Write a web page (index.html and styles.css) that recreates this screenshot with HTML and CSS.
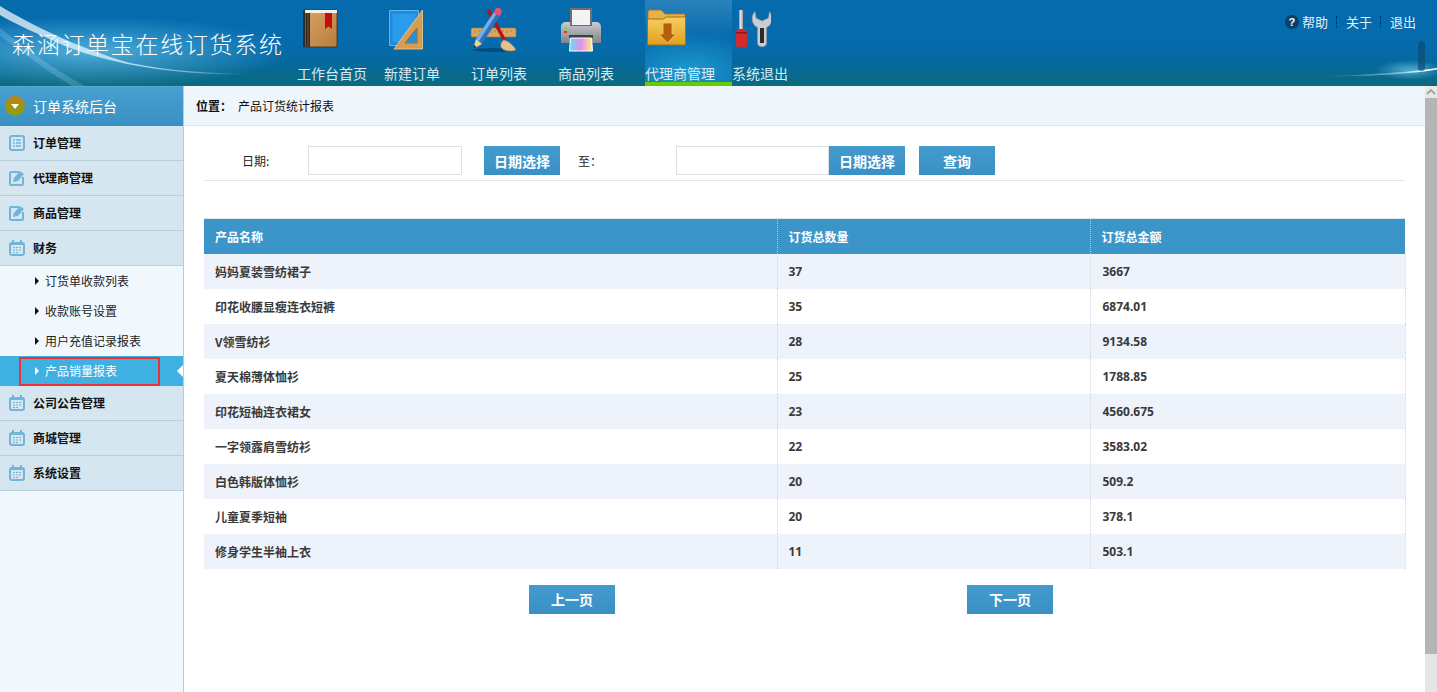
FILE: index.html
```html
<!DOCTYPE html>
<html lang="zh-CN">
<head>
<meta charset="utf-8">
<title>森涵订单宝在线订货系统</title>
<link rel="stylesheet" href="styles.css">
</head>
<body>
<header class="top">
  <svg class="swoosh" width="1437" height="86" viewBox="0 0 1437 86" aria-hidden="true">
    <defs>
      <linearGradient id="sw1" x1="0" x2="1" y1="0" y2="0"><stop offset="0" stop-color="#fff" stop-opacity=".7"/><stop offset=".6" stop-color="#d4f2ff" stop-opacity=".75"/><stop offset="1" stop-color="#bfeaff" stop-opacity="0"/></linearGradient>
      <radialGradient id="gl"><stop offset="0" stop-color="#7fd8f7" stop-opacity=".6"/><stop offset="1" stop-color="#7fd8f7" stop-opacity="0"/></radialGradient>
      <linearGradient id="sw2" x1="0" x2="1" y1="0" y2="0"><stop offset="0" stop-color="#bfeaff" stop-opacity="0"/><stop offset=".7" stop-color="#cfefff" stop-opacity=".55"/><stop offset=".9" stop-color="#fff"/><stop offset="1" stop-color="#e5f7ff"/></linearGradient>
    </defs>
    <ellipse cx="90" cy="52" rx="200" ry="36" fill="url(#gl)"/>
    <path d="M0 6C30 24 75 47 130 63 175 72 215 73 250 74 195 76 120 68 65 46 38 34 15 24 0 15Z" fill="url(#sw1)"/>
    <path d="M0 28C25 48 55 70 85 86H72C45 70 20 50 0 36Z" fill="#bfeaff" opacity=".2"/>
    <ellipse cx="1410" cy="70" rx="34" ry="10" fill="url(#gl)"/>
    <path d="M1320 76C1370 75 1410 72 1437 68V69.500C1410 74 1370 77 1320 76Z" fill="url(#sw2)"/>
  </svg>
  <div class="logo">森涵订单宝在线订货系统</div>
  <nav class="nav">
    <a class="nav-item w-home">
      <svg class="ico" width="36" height="40" viewBox="0 0 36 40">
        <defs><linearGradient id="bk" x1="0" x2="1" y1="0" y2="1"><stop offset="0" stop-color="#d9a266"/><stop offset="1" stop-color="#b97e3e"/></linearGradient></defs>
        <path d="M1 1h33v37H1z" fill="url(#bk)" stroke="#3b2d1f" stroke-width=".8"/>
        <path d="M0 1h7v37H0z" fill="#332b24"/>
        <path d="M2.500 4v34M5 4v34" stroke="#7d6c5a" stroke-width=".7"/>
        <path d="M2 1h32v3H2z" fill="#f5efe6"/>
        <path d="M22 4h7v16l-3.500-2.500L22 20z" fill="#c60c12"/>
      </svg>
      <span>工作台首页</span></a>
    <a class="nav-item w-new">
      <svg class="ico" width="36" height="42" viewBox="0 0 36 42">
        <path d="M.5 2.500h29v35H.5z" fill="#1d8fe2" stroke="#5cb4f0"/>
        <path d="M3 5h24v30H3z" fill="#2a9cec" stroke="#1878c4" stroke-width=".6"/>
        <path d="M33.500 2 5 41h28.500z" fill="#d69c52" stroke="#f2cd92" stroke-width=".8"/>
        <path d="M28 20 16 35h12z" fill="#1e92e6" stroke="#a06a2a"/>
      </svg>
      <span>新建订单</span></a>
    <a class="nav-item w-list">
      <svg class="ico" width="46" height="48" viewBox="0 0 46 48">
        <ellipse cx="22" cy="44" rx="20" ry="2" fill="#05426f" opacity=".7"/>
        <rect x="0" y="22" width="45" height="9" rx="1.500" fill="#d8a662" stroke="#9e7439" stroke-width=".6"/>
        <path d="M4 24v3M8 24v2M12 24v3M16 24v2M20 24v3M24 24v2M28 24v3M32 24v2M36 24v3M40 24v2" stroke="#9e7439" stroke-width=".7"/>
        <path d="M17 4 34 35" stroke="#b80f1b" stroke-width="3.400"/>
        <path d="M33 34c4 1 9 5 12 10-5 2-13 1-15-3-1-3 1-6 3-7z" fill="#e2c18c" stroke="#b58a4c" stroke-width=".6"/>
        <path d="M2 43l3-10L23 6l6 4L11 38z" fill="#2c72bd"/>
        <path d="M5 33 23 6l2.500 2L8 35z" fill="#72b2e8"/>
        <path d="M2 43l3-10 6 5z" fill="#eccf9b"/>
        <path d="M2 43l1-4 2.500 2z" fill="#222"/>
        <path d="M22 7l3-5c3-1 6 1 6 4l-2 4z" fill="#e85078"/>
      </svg>
      <span>订单列表</span></a>
    <a class="nav-item w-prod">
      <svg class="ico" width="40" height="44" viewBox="0 0 40 44">
        <defs>
          <linearGradient id="prb" x1="0" x2="0" y1="0" y2="1"><stop offset="0" stop-color="#c8cccf"/><stop offset="1" stop-color="#7f8489"/></linearGradient>
          <linearGradient id="pr" x1="0" x2="1"><stop offset="0" stop-color="#5fe0f2"/><stop offset=".5" stop-color="#e48ef0"/><stop offset="1" stop-color="#fff07a"/></linearGradient>
        </defs>
        <path d="M10 1h20v17H10z" fill="#f3f3f3" stroke="#6f6f6f" stroke-width="2"/>
        <path d="M0 19c0-3 2-5 5-5h4v4h22v-4h4c3 0 5 2 5 5v16H0z" fill="url(#prb)"/>
        <path d="M8 27h24v3H8z" fill="#3b4045"/>
        <path d="M3 19h3v2H3z" fill="#8fd12b"/><path d="M3 23h3v2H3z" fill="#d8332c"/>
        <path d="M9.500 30h21l1 13h-23z" fill="url(#pr)" stroke="#fff"/>
      </svg>
      <span>商品列表</span></a>
    <a class="nav-item w-agent active">
      <svg class="ico" width="40" height="38" viewBox="0 0 40 38">
        <defs><linearGradient id="fd" x1="0" x2="0" y1="0" y2="1"><stop offset="0" stop-color="#f6cf62"/><stop offset="1" stop-color="#dfa01f"/></linearGradient></defs>
        <path d="M1 4c0-1 1-2 2-2h11l4 4h20v7H1z" fill="#e6b04a" stroke="#a9741a" stroke-width=".8"/>
        <path d="M.5 11h16l3-2h19v28H.5z" fill="url(#fd)" stroke="#a86f10"/>
        <path d="M16 15h9v11h4l-8.500 9L12 26h4z" fill="#b55f08" stroke="#f3ce72" stroke-width=".8"/>
      </svg>
      <span>代理商管理</span></a>
    <a class="nav-item w-exit">
      <svg class="ico" width="36" height="40" viewBox="0 0 36 40">
        <path d="M4 1h4v19H4z" fill="#a9abad"/><path d="M5 1h1.500v19H5z" fill="#e2e2e2"/>
        <path d="M2 20h8l2 4v13c0 2-11 2-11 0V24z" fill="#cf2d2d"/><path d="M1 23h11v1.500H1z" fill="#8f1717"/>
        <path d="M20 2.500C15 8 17 16 22.500 18.500V34c0 5 9 5 9 0V18.500C37 16 39 8 34.500 2.500L33.500 9 27 12 21 9z" fill="#c9ced2" stroke="#8f979c" stroke-width=".6"/>
        <path d="M25 19h4v15h-4z" fill="#2a2a2a"/>
      </svg>
      <span>系统退出</span></a>
  </nav>
  <div class="tools">
    <span class="help-ico">?</span><a>帮助</a><i class="sep"></i><a>关于</a><i class="sep"></i><a>退出</a>
  </div>
  <div class="mini-bar"></div>
</header>
<div class="main">
  <aside class="side">
    <div class="side-head"><span class="head-ico"></span>订单系统后台</div>
    <div class="menu"><svg class="m-ico" width="16" height="16" viewBox="0 0 16 16"><rect x="1" y="1" width="14" height="14" rx="2" fill="#d5e6f0" stroke="#72b5d9" stroke-width="2"/><path d="M4 5h2M7 5h5M4 8h2M7 8h5M4 11h2M7 11h5" stroke="#72b5d9" stroke-width="1.300"/></svg>订单管理</div>
    <div class="menu"><svg class="m-ico" width="16" height="16" viewBox="0 0 16 16"><path d="M10 2H2a1 1 0 0 0-1 1v11a1 1 0 0 0 1 1h11a1 1 0 0 0 1-1V7" fill="none" stroke="#72b5d9" stroke-width="2"/><path d="M4 12l1-4 6-7 4 3-6 7z" fill="#72b5d9"/></svg>代理商管理</div>
    <div class="menu"><svg class="m-ico" width="16" height="16" viewBox="0 0 16 16"><path d="M10 2H2a1 1 0 0 0-1 1v11a1 1 0 0 0 1 1h11a1 1 0 0 0 1-1V7" fill="none" stroke="#72b5d9" stroke-width="2"/><path d="M4 12l1-4 6-7 4 3-6 7z" fill="#72b5d9"/></svg>商品管理</div>
    <div class="menu"><svg class="m-ico" width="16" height="16" viewBox="0 0 16 16"><rect x="1" y="3" width="14" height="12" rx="2" fill="#d5e6f0" stroke="#72b5d9" stroke-width="2"/><path d="M1 4h14M4 0v3M12 0v3" stroke="#72b5d9" stroke-width="2"/><path d="M4 7.500h2M7 7.500h2M10 7.500h2M4 10h2M7 10h2M10 10h2M4 12.500h2M7 12.500h2" stroke="#72b5d9"/></svg>财务</div>
    <ul class="sub">
      <li>订货单收款列表</li>
      <li>收款账号设置</li>
      <li>用户充值记录报表</li>
      <li class="cur"><span class="mark">产品销量报表</span></li>
    </ul>
    <div class="menu"><svg class="m-ico" width="16" height="16" viewBox="0 0 16 16"><rect x="1" y="3" width="14" height="12" rx="2" fill="#d5e6f0" stroke="#72b5d9" stroke-width="2"/><path d="M1 4h14M4 0v3M12 0v3" stroke="#72b5d9" stroke-width="2"/><path d="M4 7.500h2M7 7.500h2M10 7.500h2M4 10h2M7 10h2M10 10h2M4 12.500h2M7 12.500h2" stroke="#72b5d9"/></svg>公司公告管理</div>
    <div class="menu"><svg class="m-ico" width="16" height="16" viewBox="0 0 16 16"><rect x="1" y="3" width="14" height="12" rx="2" fill="#d5e6f0" stroke="#72b5d9" stroke-width="2"/><path d="M1 4h14M4 0v3M12 0v3" stroke="#72b5d9" stroke-width="2"/><path d="M4 7.500h2M7 7.500h2M10 7.500h2M4 10h2M7 10h2M10 10h2M4 12.500h2M7 12.500h2" stroke="#72b5d9"/></svg>商城管理</div>
    <div class="menu"><svg class="m-ico" width="16" height="16" viewBox="0 0 16 16"><rect x="1" y="3" width="14" height="12" rx="2" fill="#d5e6f0" stroke="#72b5d9" stroke-width="2"/><path d="M1 4h14M4 0v3M12 0v3" stroke="#72b5d9" stroke-width="2"/><path d="M4 7.500h2M7 7.500h2M10 7.500h2M4 10h2M7 10h2M10 10h2M4 12.500h2M7 12.500h2" stroke="#72b5d9"/></svg>系统设置</div>
  </aside>
  <main class="content">
    <div class="crumb"><b>位置：</b><span>产品订货统计报表</span></div>
    <div class="body">
      <form class="filter">
        <label class="f-label">日期:</label>
        <input class="f-input" type="text">
        <button class="btn b-date first" type="button">日期选择</button>
        <label class="f-to">至：</label>
        <input class="f-input second" type="text">
        <button class="btn b-date" type="button">日期选择</button>
        <button class="btn b-query" type="button">查询</button>
      </form>
      <table class="grid">
        <colgroup><col class="c1"><col class="c2"><col class="c3"></colgroup>
        <thead><tr><th>产品名称</th><th>订货总数量</th><th>订货总金额</th></tr></thead>
        <tbody>
          <tr><td>妈妈夏装雪纺裙子</td><td>37</td><td>3667</td></tr>
          <tr><td>印花收腰显瘦连衣短裤</td><td>35</td><td>6874.01</td></tr>
          <tr><td>V领雪纺衫</td><td>28</td><td>9134.58</td></tr>
          <tr><td>夏天棉薄体恤衫</td><td>25</td><td>1788.85</td></tr>
          <tr><td>印花短袖连衣裙女</td><td>23</td><td>4560.675</td></tr>
          <tr><td>一字领露肩雪纺衫</td><td>22</td><td>3583.02</td></tr>
          <tr><td>白色韩版体恤衫</td><td>20</td><td>509.2</td></tr>
          <tr><td>儿童夏季短袖</td><td>20</td><td>378.1</td></tr>
          <tr><td>修身学生半袖上衣</td><td>11</td><td>503.1</td></tr>
        </tbody>
      </table>
      <div class="pager">
        <button class="btn b-page" type="button">上一页</button>
        <button class="btn b-page" type="button">下一页</button>
      </div>
    </div>
  </main>
  <div class="scroll">
    <div class="s-btn"><svg width="10" height="6" viewBox="0 0 10 6"><path d="M1 5l4-4 4 4" fill="none" stroke="#a3a3a3" stroke-width="1.800"/></svg></div>
    <div class="s-thumb"></div>
  </div>
</div>
</body>
</html>
```
FILE: styles.css
```css
* { box-sizing: border-box; }
html, body { margin: 0; height: 100%; overflow: hidden; }
body { font-family: "Liberation Sans", "Noto Sans CJK SC", sans-serif; font-size: 12px; color: #222; background: #fff; }

.top { position: relative; height: 86px; display: flex; background: linear-gradient(180deg, #056bad 0, #066bad 42px, #05699f 62px, #0b6a7c 86px); overflow: hidden; }
.swoosh { position: absolute; left: 0; top: 0; }
.logo { position: relative; width: 297px; padding: 28px 0 0 12px; font: 300 23px/30px "Noto Sans CJK SC", sans-serif; letter-spacing: 1.700px; color: #fff; white-space: nowrap; }
.nav { position: relative; display: flex; height: 86px; }
.nav-item { position: relative; display: flex; justify-content: center; height: 86px; color: #dcebf3; font: 14px/18px "Noto Sans CJK SC", sans-serif; white-space: nowrap; }
.nav-item span { position: absolute; top: 64px; }
.nav-item .ico { position: absolute; }
.w-home { width: 70px; } .w-home .ico { left: 6px; top: 9px; }
.w-new { margin-left: 17px; width: 56px; } .w-new .ico { left: 5px; top: 8px; }
.w-list { width: 56px; margin-left: 31px; } .w-list .ico { left: 0; top: 6px; }
.w-prod { width: 56px; margin-left: 31px; } .w-prod .ico { left: 3px; top: 8px; }
.w-agent { width: 87px; margin-left: 31px; background: radial-gradient(ellipse 80px 40px at 50% 72px, #1d9ad0 0, rgba(29,154,208,0) 100%), linear-gradient(180deg, #2b82bb 0, #076cad 45%, #076cad 100%); border-bottom: 4px solid #66cc00; }
.w-agent span { left: 0; }
.w-agent .ico { left: 2px; top: 8px; }
.w-exit { width: 56px; } .w-exit .ico { left: 3px; top: 9px; }
.tools { position: absolute; right: 21px; top: 13px; display: flex; align-items: center; color: #e6f1f7; font: 13px/18px "Noto Sans CJK SC", sans-serif; }
.help-ico { width: 14px; height: 14px; margin-right: 3px; border-radius: 50%; background: #0a3f68; color: #fff; font: bold 11px/14px "Liberation Sans", sans-serif; text-align: center; }
.sep { width: 0; height: 12px; margin: 0 9px 0 8px; border-left: 1px dotted #123; }
.mini-bar { position: absolute; left: 1418px; top: 41px; width: 7px; height: 30px; border-radius: 4px; background: rgba(10,70,110,.6); }

.main { display: flex; height: 606px; }
.side { width: 184px; flex: none; background: #f0f8fe; border-right: 1px solid #b7cbd8; }
.side-head { display: flex; align-items: center; height: 40px; padding: 0 0 1px 5px; color: #fff; font: 14px/18px "Noto Sans CJK SC", sans-serif; background: linear-gradient(180deg, #46a0d0, #3a90c4); border-top: 1px solid #58a9d6; }
.head-ico { position: relative; width: 20px; height: 20px; margin-right: 8px; border-radius: 50%; background: linear-gradient(180deg, #c0800e, #82a614); }
.head-ico::after { content: ""; position: absolute; left: 6px; top: 8px; border: 4px solid transparent; border-top: 5px solid #fff; border-bottom: 0; }
.menu { display: flex; align-items: center; height: 35px; padding-left: 9px; background: #d5e6f0; border-bottom: 1px solid #b9ced9; color: #111; font: 700 12px/16px "Noto Sans CJK SC", sans-serif; }
.m-ico { margin-right: 8px; flex: none; }
.sub { margin: 0; padding: 0; list-style: none; }
.sub li { position: relative; height: 30px; padding-left: 45px; color: #222; font: 12px/30px "Noto Sans CJK SC", sans-serif; }
.sub li::before { content: ""; position: absolute; left: 35px; top: 11px; border: 4px solid transparent; border-left: 4px solid #111; border-right: 0; }
.sub li.cur { background: #3fb0e2; color: #fff; }
.sub li.cur::before { border-left-color: #fff; z-index: 1; }
.sub li.cur::after { content: ""; position: absolute; right: 0; top: 9px; border: 6px solid transparent; border-right: 6px solid #fff; border-left: 0; }
.mark { position: absolute; left: 19px; top: 1px; width: 141px; height: 29px; padding-left: 24px; border: 2px solid #ee2f35; line-height: 24px; }

.content { flex: 1; min-width: 0; }
.crumb { height: 40px; padding-left: 12px; background: #eef6fc; border-bottom: 1px solid #dde8ec; font: 12px/40px "Noto Sans CJK SC", sans-serif; color: #111; }
.crumb b { font-weight: 700; margin-right: 6px; }
.body { padding: 0 20px; }
.filter { display: flex; height: 55px; padding-top: 20px; border-bottom: 1px solid #e0e8e8; }
.f-label { width: 104px; padding-left: 38px; font: 12px/29px "Noto Sans CJK SC", sans-serif; color: #222; }
.f-input { width: 154px; height: 29px; padding: 0; border: 1px solid #dfdfdf; background: #fff; outline: 0; }
.f-input.second { width: 153px; }
.btn { padding: 0; border: 0; color: #fff; font: 700 14px/1 "Noto Sans CJK SC", sans-serif; background: linear-gradient(180deg, #439bcd, #3a90c5); }
.b-date { width: 76px; height: 29px; }
.b-date.first { margin-left: 22px; }
.f-to { width: 116px; padding-left: 18px; font: 12px/29px "Noto Sans CJK SC", sans-serif; color: #222; }
.b-query { width: 76px; height: 29px; margin-left: 14px; }
.grid { width: 1201px; margin-top: 37px; border-collapse: collapse; table-layout: fixed; border-top: 1px solid #dfe5e8; }
.c1 { width: 573px; } .c2 { width: 313px; } .c3 { width: 315px; }
.grid th { height: 35px; padding: 2px 0 0 11px; background: #3c95c9; color: #fff; text-align: left; font: 700 12px/16px "Noto Sans CJK SC", sans-serif; border-left: 1px dotted #b5cfe0; }
.grid td { height: 35px; padding: 2px 0 0 11px; color: #3a3a3a; font: 700 12px/16px "Noto Sans CJK SC", sans-serif; border-left: 1px dotted #ccd5dc; }
.grid th:first-child, .grid td:first-child { border-left: 0; }
.grid td:nth-child(n+2) { font-family: "Open Sans", "Noto Sans", sans-serif; font-weight: 700; }
.grid td:nth-child(3) { padding-left: 12px; }
.grid tbody tr:nth-child(odd) td { background: #eef3fb; }
.grid td:last-child { border-right: 1px dotted #ccd5dc; }
.pager { display: flex; padding: 16px 0 0 325px; gap: 352px; }
.b-page { width: 86px; height: 29px; }

.scroll { width: 12px; flex: none; display: flex; flex-direction: column; background: #e5e5e5; }
.s-btn { display: flex; align-items: center; justify-content: center; height: 12px; flex: none; background: #e8e8e8; }
.s-thumb { height: 556px; background: #b5b5b5; }
```
